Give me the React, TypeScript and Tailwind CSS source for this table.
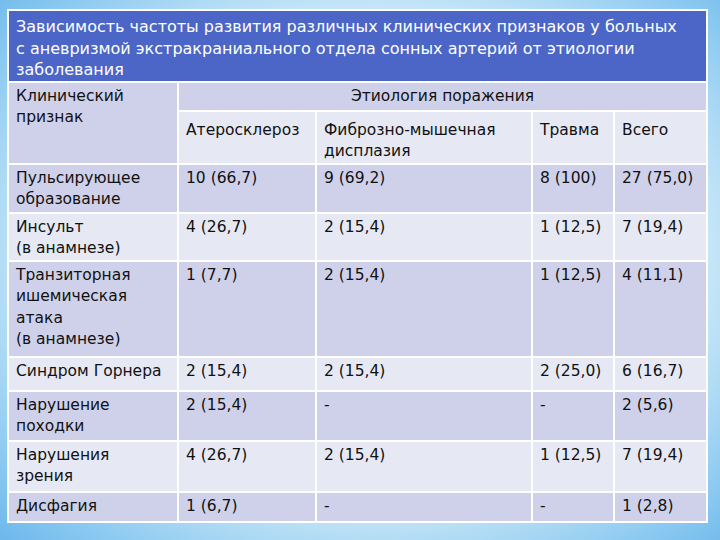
const rows: { label: string[]; cells: string[]; h: string; dark: boolean }[] = [
  { label: ['Пульсирующее', 'образование'], cells: ['10 (66,7)', '9 (69,2)', '8 (100)', '27 (75,0)'], h: 'h-[49px]', dark: true },
  { label: ['Инсульт', '(в анамнезе)'], cells: ['4 (26,7)', '2 (15,4)', '1 (12,5)', '7 (19,4)'], h: 'h-[48px]', dark: false },
  { label: ['Транзиторная', 'ишемическая', 'атака', '(в анамнезе)'], cells: ['1 (7,7)', '2 (15,4)', '1 (12,5)', '4 (11,1)'], h: 'h-[96px]', dark: true },
  { label: ['Синдром Горнера'], cells: ['2 (15,4)', '2 (15,4)', '2 (25,0)', '6 (16,7)'], h: 'h-[34px]', dark: false },
  { label: ['Нарушение', 'походки'], cells: ['2 (15,4)', '-', '-', '2 (5,6)'], h: 'h-[50px]', dark: true },
  { label: ['Нарушения', 'зрения'], cells: ['4 (26,7)', '2 (15,4)', '1 (12,5)', '7 (19,4)'], h: 'h-[51px]', dark: false },
  { label: ['Дисфагия'], cells: ['1 (6,7)', '-', '-', '1 (2,8)'], h: 'h-[30px]', dark: true },
];

const cell = 'border-2 border-white align-top px-[7px] pt-[3px] text-left font-normal';

export default function App() {
  return (
    <div className="w-[720px] h-[540px] overflow-hidden bg-[radial-gradient(ellipse_at_52%_48%,#ffffff_0%,#f4fbfe_35%,#d2ecf9_58%,#8fcbf1_85%,#6cb8ec_100%)] pt-[9px] pl-[7px]">
      <table
        className="w-[699px] border-collapse table-fixed text-[15.5px] leading-[21.5px] text-[#111]"
        style={{ fontFamily: '"DejaVu Sans", Verdana, sans-serif' }}
      >
        <colgroup>
          <col className="w-[170px]" />
          <col className="w-[138px]" />
          <col className="w-[216px]" />
          <col className="w-[82px]" />
          <col className="w-[93px]" />
        </colgroup>
        <thead>
          <tr>
            <th
              colSpan={5}
              className="h-[71px] border-2 border-white bg-[#4b66c7] px-[7px] pt-[5px] align-top text-left font-normal text-[16px] leading-[21.5px] text-white whitespace-nowrap"
            >
              Зависимость частоты развития различных клинических признаков у больных
              <br />
              с аневризмой экстракраниального отдела сонных артерий от этиологии
              <br />
              заболевания
            </th>
          </tr>
          <tr>
            <th rowSpan={2} className={`${cell} bg-[#cfd1ea]`}>
              Клинический
              <br />
              признак
            </th>
            <th colSpan={4} className="h-[29px] border-2 border-white bg-[#cfd1ea] pt-[3px] align-top text-center font-normal">
              Этиология поражения
            </th>
          </tr>
          <tr className="h-[52px]">
            <th className={`${cell} bg-[#e6e9f4] pt-[8px]`}>Атеросклероз</th>
            <th className={`${cell} bg-[#e6e9f4] pt-[8px]`}>
              Фиброзно-мышечная
              <br />
              дисплазия
            </th>
            <th className={`${cell} bg-[#e6e9f4] pt-[8px]`}>Травма</th>
            <th className={`${cell} bg-[#e6e9f4] pt-[8px]`}>Всего</th>
          </tr>
        </thead>
        <tbody>
          {rows.map((r) => (
            <tr key={r.label.join(' ')} className={`${r.h} ${r.dark ? 'bg-[#cfd1ea]' : 'bg-[#e6e9f4]'}`}>
              <td className={cell}>
                {r.label.map((l, i) => (
                  <div key={i}>{l}</div>
                ))}
              </td>
              {r.cells.map((c, i) => (
                <td key={i} className={cell}>
                  {c}
                </td>
              ))}
            </tr>
          ))}
        </tbody>
      </table>
    </div>
  );
}
